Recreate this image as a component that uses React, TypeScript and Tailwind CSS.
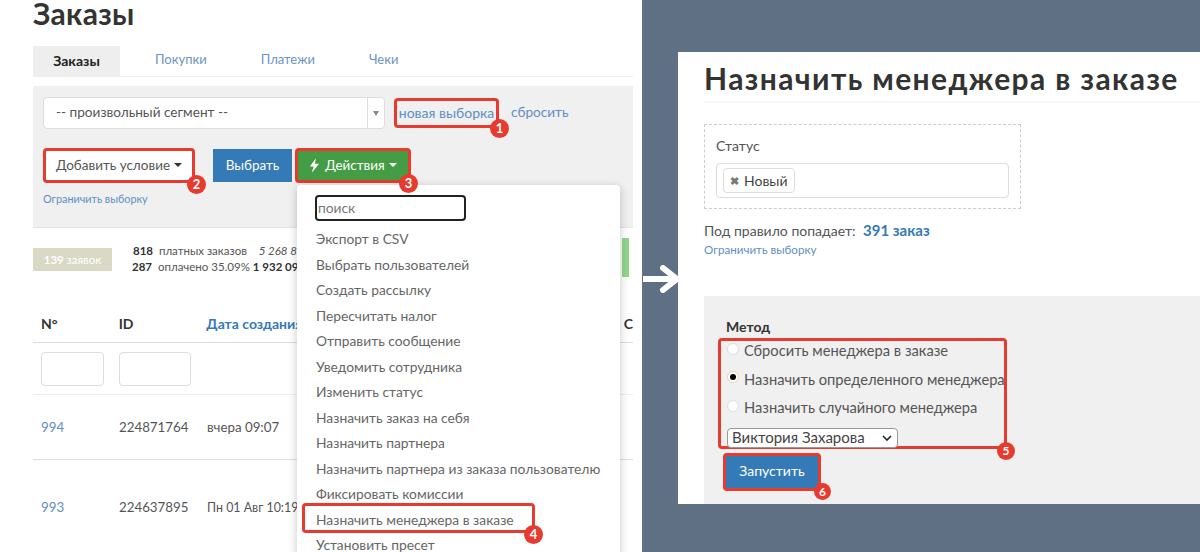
import React from "react";

const actions = [
  "Экспорт в CSV",
  "Выбрать пользователей",
  "Создать рассылку",
  "Пересчитать налог",
  "Отправить сообщение",
  "Уведомить сотрудника",
  "Изменить статус",
  "Назначить заказ на себя",
  "Назначить партнера",
  "Назначить партнера из заказа пользователю",
  "Фиксировать комиссии",
  "Назначить менеджера в заказе",
  "Установить пресет",
];

const methods = [
  { label: "Сбросить менеджера в заказе", checked: false },
  { label: "Назначить определенного менеджера", checked: true },
  { label: "Назначить случайного менеджера", checked: false },
];

const Badge = ({ n, className }: { n: number; className: string }) => (
  <span
    className={`absolute z-10 flex items-center justify-center rounded-full bg-[#e63b2e] font-bold leading-none text-white ${className}`}
  >
    {n}
  </span>
);

const Caret = ({ color }: { color: string }) => (
  <span className={`ml-1 inline-block h-0 w-0 border-x-[4px] border-t-[4px] border-x-transparent align-middle ${color}`} />
);

const Orders = () => (
  <div className="relative h-full w-[642px] shrink-0 overflow-hidden bg-white pl-[33px] pr-[9px]">
    <h1 className="h-[46px] text-[30px] font-bold leading-[26px] tracking-[0.3px] text-[#333]">Заказы</h1>

    <div className="flex h-[31px] border-b border-[#eee] text-[13px]">
      <div className="flex h-[30px] w-[87px] items-center justify-center bg-[#eee] pb-[2px] text-[14px] font-bold text-[#222]">Заказы</div>
      <span className="ml-[35px] flex h-[30px] items-center pb-[2px] text-[#6d94c4]">Покупки</span>
      <span className="ml-[54px] flex h-[30px] items-center pb-[2px] text-[#6d94c4]">Платежи</span>
      <span className="ml-[54px] flex h-[30px] items-center pb-[2px] text-[#6d94c4]">Чеки</span>
    </div>

    <div className="mt-[9px] h-[142px] border-b border-[#e3e3e3] bg-[#f0f0f0] pl-[10px] pt-[11px]">
      <div className="flex items-center">
        <div className="flex h-[32px] w-[342px] items-center rounded border border-[#ddd] bg-white text-[13.6px] text-[#555]">
          <span className="flex-1 pb-[1px] pl-[12px]">-- произвольный сегмент --</span>
          <span className="flex h-full w-[17px] items-center justify-center border-l border-[#ddd]">
            <span className="h-0 w-0 border-x-[3px] border-t-[5px] border-x-transparent border-t-[#888]" />
          </span>
        </div>
        <div className="relative ml-[9px] flex h-[30px] w-[105px] items-center justify-center rounded border-[3px] border-[#e63b2e] pb-[1px] text-[14px] text-[#5f8ec4]">
          новая выборка
          <Badge n={1} className="-bottom-[13px] -right-[13px] h-[19px] w-[19px] text-[13px]" />
        </div>
        <span className="ml-[12px] pb-[1px] text-[13.6px] text-[#5f8ec4]">сбросить</span>
      </div>

      <div className="mt-[19px] flex items-center">
        <div className="relative flex h-[35px] w-[152px] items-center justify-center rounded border-[3px] border-[#e63b2e] bg-white pb-[1px] text-[13.5px] text-[#555]">
          Добавить условие
          <Caret color="border-t-[#333]" />
          <Badge n={2} className="-bottom-[14px] -right-[14px] h-[19px] w-[19px] text-[13px]" />
        </div>
        <div className="ml-[18px] flex h-[33px] w-[79px] items-center justify-center bg-[#337ab7] pb-[1px] text-[13.5px] text-white">Выбрать</div>
        <div className="relative ml-[3px] flex h-[35px] w-[116px] items-center justify-center rounded border-[3px] border-[#e63b2e] bg-[#449d44] pb-[1px] text-[13.5px] text-white">
          <svg viewBox="0 0 12 16" className="mr-[5px] h-[15px] w-[11px] fill-white">
            <path d="M7.5 0 1 9h4l-2 7 8-10H6.5z" />
          </svg>
          Действия
          <Caret color="border-t-white" />
          <Badge n={3} className="-bottom-[13px] -right-[10px] h-[19px] w-[19px] text-[13px]" />
        </div>
      </div>
      <p className="mt-[8px] text-[10.8px] text-[#5f8ec4]">Ограничить выборку</p>
    </div>

    <div className="mt-[17px] flex h-[29px] items-center text-[11.5px] text-[#555]">
      <div className="flex h-[23px] w-[79px] items-center justify-center bg-[#d9d9c5] text-[11.5px] font-bold text-white">
        139&nbsp;<span className="font-normal">заявок</span>
      </div>
      <div className="ml-[20px] -mt-[2px] leading-[16px]">
        <div className="whitespace-nowrap">
          <b className="ml-[1px] text-[#333]">818</b>&nbsp; платных заказов &nbsp; &nbsp;<i>5 268 8</i>
        </div>
        <div className="whitespace-nowrap">
          <b className="text-[#333]">287</b>&nbsp; оплачено 35.09%&nbsp;<b className="text-[#333]">1 932 09</b>
        </div>
      </div>
    </div>

    <div className="absolute left-[622px] top-[238px] h-[39px] w-[7px] bg-[#8fd68a]" />

    <div className="mt-[35px] text-[13.3px]">
      <div className="flex h-[34px] items-start border-b border-[#ddd] pt-[4px] text-[14px] font-bold text-[#333]">
        <span className="ml-[8px] w-[78px]">N°</span>
        <span className="w-[88px]">ID</span>
        <span className="w-[419px] whitespace-nowrap text-[#337ab7]">Дата создания</span>
        <span>С</span>
      </div>
      <div className="flex h-[52px] items-center gap-[15px] border-b border-[#eee] pl-[8px]">
        <div className="h-[34px] w-[63px] rounded border border-[#ddd] bg-white" />
        <div className="h-[34px] w-[72px] rounded border border-[#ddd] bg-white" />
      </div>
      <div className="flex h-[65px] items-center border-b border-[#ddd] pt-[1px] text-[#555]">
        <span className="ml-[8px] w-[78px] text-[#5f8ec4]">994</span>
        <span className="w-[88px]">224871764</span>
        <span>вчера 09:07</span>
      </div>
      <div className="flex h-[96px] items-center text-[#555]">
        <span className="ml-[8px] w-[78px] text-[#5f8ec4]">993</span>
        <span className="w-[88px]">224637895</span>
        <span className="whitespace-nowrap text-[12.4px]">Пн 01 Авг 10:19</span>
      </div>
    </div>

    <div className="absolute left-[297px] top-[185px] h-[380px] w-[323px] rounded bg-white pl-[19px] pt-[10px] shadow-[0_2px_10px_rgba(0,0,0,0.22)]">
      <div className="-ml-[1px] flex h-[26px] w-[151px] items-center rounded-sm border-2 border-[#222] pl-[1px] text-[13.8px] text-[#777]">поиск</div>
      <ul className="mt-[6px] text-[13.8px] text-[#666]">
        {actions.map((a) => (
          <li key={a} className="flex h-[25.5px] items-center whitespace-nowrap">
            {a}
          </li>
        ))}
      </ul>
    </div>
    <div className="absolute left-[302px] top-[503px] h-[30px] w-[233px] rounded border-[3px] border-[#e63b2e]">
      <Badge n={4} className="-bottom-[14px] -right-[11px] h-[19px] w-[19px] text-[13px]" />
    </div>
  </div>
);

const Rule = () => (
  <div className="h-full flex-1 bg-[#5f6f84] pb-[48px] pl-[36px] pt-[52px]">
    <div className="h-full overflow-hidden bg-white pl-[26px]">
      <h2 className="h-[51px] whitespace-nowrap border-b-2 border-[#f5f5f5] pt-[9px] text-[30px] font-bold leading-[34px] tracking-[1.4px] text-[#333]">
        Назначить менеджера в заказе
      </h2>
      <div className="mt-[21px] h-[85px] w-[317px] border border-dashed border-[#ccc] px-[11px] pt-[13px]">
        <p className="text-[14px] leading-[16px] text-[#555]">Статус</p>
        <div className="mt-[9px] flex h-[35px] w-[293px] items-center rounded border border-[#ddd] pl-[6px]">
          <span className="flex h-[25px] items-center gap-[5px] rounded border border-[#ddd] px-[6px] text-[14px] text-[#444]">
            <span className="text-[11px] font-bold leading-none text-[#777]">✖</span>
            Новый
          </span>
        </div>
      </div>
      <p className="mt-[13px] text-[14px] leading-[16px] text-[#555]">
        Под правило попадает: <b className="ml-[4px] text-[15px] text-[#337ab7]">391 заказ</b>
      </p>
      <p className="mt-[4px] text-[11.6px] leading-[14px] text-[#5f8ec4]">Ограничить выборку</p>

      <div className="mt-[39px] h-[209px] bg-[#f0f0f0] pl-[22px] pt-[23px]">
        <p className="text-[14px] font-bold leading-[16px] text-[#333]">Метод</p>
        <div className="relative -ml-[8px] mt-[3px] h-[111px] w-[289px] rounded-sm border-[3px] border-[#e63b2e] pl-[6px]">
          <div className="-mt-[5px]">
            {methods.map((m) => (
              <div key={m.label} className="flex h-[28.5px] items-center whitespace-nowrap text-[14.7px] text-[#555]">
                <span
                  className={`-mt-[3px] mr-[5px] flex h-[12px] w-[12px] shrink-0 items-center justify-center rounded-full border ${m.checked ? "border-[#e8d9a8] bg-white" : "border-[#ddd] bg-white"}`}
                >
                  {m.checked && <span className="h-[6px] w-[6px] rounded-full bg-black" />}
                </span>
                {m.label}
              </div>
            ))}
          </div>
          <div className="mt-[6px] flex h-[20px] w-[171px] items-center justify-between rounded-sm border border-[#999] bg-white pl-[4px] pr-[5px] text-[15px] text-[#444]">
            Виктория Захарова
            <svg viewBox="0 0 10 6" className="h-[6px] w-[10px] fill-none stroke-[#222] stroke-[1.6]">
              <path d="M1 1l4 4 4-4" />
            </svg>
          </div>
          <Badge n={5} className="-bottom-[14px] -right-[11px] h-[18px] w-[18px] text-[12px]" />
        </div>
        <div className="relative -ml-[3px] mt-[4px] flex h-[38px] w-[98px] items-center justify-center rounded border-[3px] border-[#e63b2e] bg-[#337ab7] pb-[4px] text-[14px] text-white">
          Запустить
          <Badge n={6} className="-bottom-[12px] -right-[13px] h-[17px] w-[17px] text-[12px]" />
        </div>
      </div>
    </div>
  </div>
);

const App = () => (
  <div className="relative flex h-[552px] w-[1200px] overflow-hidden font-['Lato','Noto_Sans',sans-serif]">
    <Orders />
    <Rule />
    <svg viewBox="0 0 37 28" className="absolute left-[642px] top-[265px] h-[28px] w-[37px] fill-none stroke-white">
      <path d="M1 14h33" strokeWidth="6" />
      <path d="M21 3l14 11-14 11" strokeWidth="6" strokeLinecap="round" strokeLinejoin="round" />
    </svg>
  </div>
);

export default App;
